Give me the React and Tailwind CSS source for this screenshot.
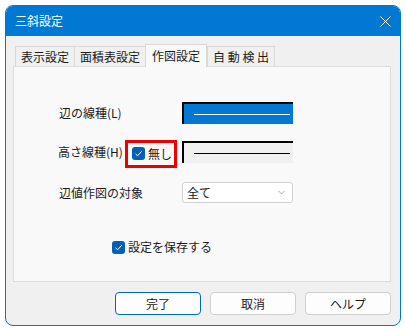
import { ChevronDown } from 'lucide-react'

const font = { fontFamily: '"Noto Sans CJK JP", "Noto Sans", sans-serif' }

function Check({ className = '' }) {
  return (
    <span className={`shrink-0 flex items-center justify-center w-[13px] h-[13px] rounded-[3px] bg-[#005fb8] ${className}`}>
      <svg width="9" height="9" viewBox="0 0 9 9" fill="none">
        <path d="M1.5 4.8 L3.6 6.8 L7.6 2.4" stroke="white" strokeWidth="1" />
      </svg>
    </span>
  )
}

function LineBox({ selected }) {
  return (
    <div
      className={`shrink-0 w-[111px] h-[22px] border-t-2 border-l-2 border-black flex items-center pl-[10px] ${
        selected ? 'bg-[#0078d4]' : 'bg-[#f0f0f0]'
      }`}
    >
      <div className={`w-[96px] h-px ${selected ? 'bg-white' : 'bg-black'}`} />
    </div>
  )
}

export default function App() {
  const tabs = ['表示設定', '面積表設定', '作図設定', '自 動 検 出']
  const active = 2

  return (
    <div className="w-[405px] h-[331px] bg-white pt-[5px] pl-[5px] text-[12px] text-[#1a1a1a]" style={font}>
      <div className="w-[396px] h-[321px] rounded-lg border border-[#0078d4] overflow-hidden flex flex-col bg-[#f0f0f0]">
        {/* Title bar */}
        <div className="h-[30px] bg-[#0078d4] flex items-center justify-between pl-[9px] pr-[9px] text-white">
          <span className="text-[12px] leading-none">三斜設定</span>
          <svg width="11" height="11" viewBox="0 0 11 11">
            <path d="M0.5 0.5 L10.5 10.5 M10.5 0.5 L0.5 10.5" stroke="white" strokeWidth="1" />
          </svg>
        </div>

        <div className="flex-1 flex flex-col pl-[7px] pr-[9px]">
          {/* Tabs */}
          <div className="mt-[8px] h-[22px] flex items-end pl-[2px] relative z-10">
            {tabs.map((t, i) => (
              <div
                key={t}
                className={`flex items-center justify-center border border-[#d9d9d9] ${
                  i === active
                    ? 'h-[23px] -mb-px bg-[#f9f9f9] border-b-0 px-[6px]'
                    : 'h-[20px] bg-[#f0f0f0] border-b-0 px-[5px]'
                } ${i > 0 && i !== active && i - 1 !== active ? 'border-l-0' : ''} ${
                  i === active - 1 ? 'border-r-0' : ''
                }`}
              >
                <span className="leading-none">{t}</span>
              </div>
            ))}
          </div>

          {/* Panel */}
          <div className="h-[216px] bg-[#f9f9f9] border border-[#dcdcdc] flex flex-col">
            <div className="mt-[35px] h-[22px] flex items-center">
              <div className="shrink-0 w-[168px] pl-[45px]">辺の線種(L)</div>
              <LineBox selected />
            </div>

            <div className="mt-[17px] h-[22px] flex items-center">
              <div className="shrink-0 w-[168px] pl-[44px] flex items-center">
                <span className="whitespace-nowrap">高さ線種(H)</span>
                <div className="shrink-0 ml-auto mr-[5px] w-[52px] h-[28px] border-[3px] border-[#ee0000] flex items-center pl-[4px] gap-[3px] mt-[3px]">
                  <Check />
                  <span className="whitespace-nowrap">無し</span>
                </div>
              </div>
              <LineBox />
            </div>

            <div className="mt-[19px] h-[21px] flex items-center">
              <div className="shrink-0 w-[168px] pl-[45px]">辺値作図の対象</div>
              <div className="shrink-0 w-[111px] h-[21px] bg-white border border-[#d0d0d0] rounded-[3px] flex items-center justify-between pl-[4px] pr-[5px]">
                <span>全て</span>
                <ChevronDown size={11} strokeWidth={1.25} color="#666" />
              </div>
            </div>

            <div className="mt-[35px] flex items-center pl-[98px] gap-[3px]">
              <Check />
              <span>設定を保存する</span>
            </div>
          </div>

          {/* Buttons */}
          <div className="mt-[10px] flex justify-end gap-[9px]">
            <button className="w-[86px] h-[23px] rounded-[4px] border border-[#0067c0] bg-[#fdfdfd] leading-none">完了</button>
            <button className="w-[86px] h-[23px] rounded-[4px] border border-[#d0d0d0] bg-[#fdfdfd] leading-none">取消</button>
            <button className="w-[86px] h-[23px] rounded-[4px] border border-[#d0d0d0] bg-[#fdfdfd] leading-none">ヘルプ</button>
          </div>
        </div>
      </div>
    </div>
  )
}
